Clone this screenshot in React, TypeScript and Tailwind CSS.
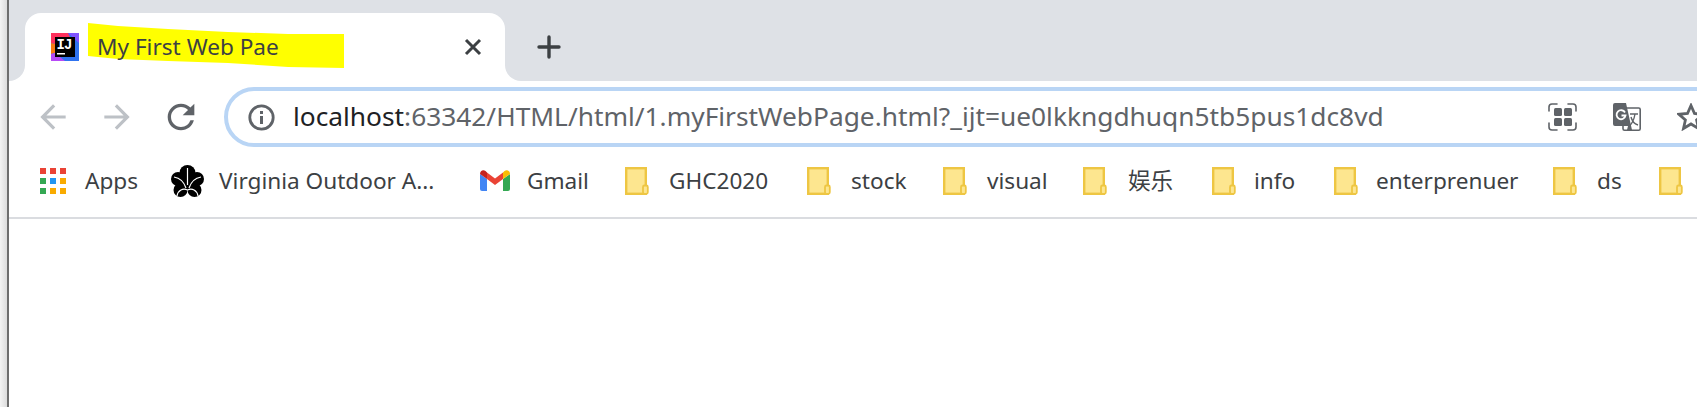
import type { ReactNode } from 'react'

// Chrome window chrome, scaled up screenshot: tab strip, omnibox and bookmarks bar

function IdeaIcon() {
  return (
    <svg width="28" height="28" viewBox="0 0 28 28" className="shrink-0">
      <rect width="28" height="28" fill="#2f73f0" />
      <polygon points="0,0 17,0 28,10 28,0" fill="#7f52ff" />
      <polygon points="0,0 17,0 20,6 8,12 0,10" fill="#fe315d" />
      <polygon points="0,10 8,12 4,20 0,21" fill="#f97a12" />
      <polygon points="0,21 4,20 14,28 0,28" fill="#b74af7" />
      <rect x="4" y="4" width="20" height="20" fill="#000000" />
      <text x="5.500" y="16" fill="#ffffff" fontSize="14" fontWeight="700" fontFamily="Liberation Mono, monospace" textLength="16">IJ</text>
      <rect x="6" y="20" width="8" height="1.5" fill="#ffffff" />
    </svg>
  )
}

function AppsIcon() {
  const colors = ['#ea4335', '#ea4335', '#ea4335', '#34a853', '#2196f3', '#f9ab00', '#34a853', '#f9ab00', '#f9ab00']
  return (
    <svg width="26" height="26" viewBox="0 0 26 26" className="shrink-0">
      {colors.map((c, i) => (
        <rect key={i} x={(i % 3) * 10} y={Math.floor(i / 3) * 10} width="6" height="6" fill={c} />
      ))}
    </svg>
  )
}

function FlowerIcon() {
  return (
    <svg width="33" height="32" viewBox="0 0 33 32" className="shrink-0">
      <circle cx="16.5" cy="8" r="8" fill="#000" />
      <circle cx="7" cy="14" r="7" fill="#000" />
      <circle cx="26" cy="14" r="7" fill="#000" />
      <circle cx="9.5" cy="25" r="7" fill="#000" />
      <circle cx="23.5" cy="25" r="7" fill="#000" />
      <rect x="8" y="10" width="17" height="15" fill="#000" />
      <g fill="none" stroke="#fff" strokeWidth="1.2">
        <path d="M16.5 3V20" />
        <path d="M3 12C9 13 13 17 15 23" />
        <path d="M30 12C24 13 20 17 18 23" />
        <path d="M6 31C7 25 12 23 16.5 25C21 23 26 25 27 31" />
      </g>
    </svg>
  )
}

function GmailIcon() {
  return (
    <svg width="30" height="21" viewBox="0 0 30 21" className="shrink-0">
      <path d="M0 4V19a2 2 0 0 0 2 2H7V9z" fill="#4285f4" />
      <path d="M30 4V19a2 2 0 0 1-2 2H23V9z" fill="#34a853" />
      <path d="M7 9V2.5L15 8.5 23 2.5V9L15 15z" fill="#ea4335" />
      <path d="M0 4C0 1 3 -1 5.5 1L7 2.5V9L0 4z" fill="#c5221f" />
      <path d="M30 4C30 1 27 -1 24.500 1L23 2.500V9L30 4z" fill="#fbbc04" />
    </svg>
  )
}

function FolderIcon() {
  return (
    <svg width="24" height="28" viewBox="0 0 24 28" className="shrink-0">
      <rect x="1.2" y="1.2" width="19.600" height="25.600" fill="#fde68f" stroke="#eec643" strokeWidth="2.400" />
      <rect x="18" y="18.500" width="4.800" height="8.300" rx="1.500" fill="#fde68f" stroke="#eec643" strokeWidth="1.800" />
    </svg>
  )
}

function ArrowIcon({ flip = false }: { flip?: boolean }) {
  return (
    <svg width="38" height="38" viewBox="0 0 24 24" fill="#bdc1c6" className={flip ? 'rotate-180' : ''}>
      <path d="M20 11H7.830l5.590-5.590L12 4l-8 8 8 8 1.410-1.410L7.830 13H20v-2z" />
    </svg>
  )
}

function ReloadIcon() {
  return (
    <svg width="40" height="40" viewBox="0 0 24 24" fill="#5f6368">
      <path d="M17.650 6.350A7.958 7.958 0 0 0 12 4c-4.420 0-7.990 3.580-7.990 8s3.570 8 7.990 8c3.730 0 6.840-2.550 7.730-6h-2.080A5.990 5.990 0 0 1 12 18c-3.310 0-6-2.690-6-6s2.690-6 6-6c1.660 0 3.140.69 4.220 1.780L13 11h7V4l-2.350 2.350z" />
    </svg>
  )
}

function InfoIcon() {
  return (
    <svg width="27" height="27" viewBox="0 0 27 27" className="shrink-0">
      <circle cx="13.500" cy="13.500" r="11.700" fill="none" stroke="#5f6368" strokeWidth="2.800" />
      <rect x="12" y="12" width="3" height="8" fill="#5f6368" />
      <rect x="12" y="7" width="3" height="3" fill="#5f6368" />
    </svg>
  )
}

function LensIcon() {
  return (
    <svg width="29" height="28" viewBox="0 0 29 28" className="shrink-0">
      <g fill="none" stroke="#5f6368" strokeWidth="1.600" strokeLinecap="round">
        <path d="M1 8V4a3 3 0 0 1 3-3H9" />
        <path d="M20 1H25a3 3 0 0 1 3 3V8" />
        <path d="M28 20V24a3 3 0 0 1-3 3H20" />
        <path d="M9 27H4a3 3 0 0 1-3-3V20" />
      </g>
      <rect x="6" y="5" width="8" height="8" rx="1.500" fill="#5f6368" />
      <rect x="16" y="5" width="8" height="8" rx="1.500" fill="#5f6368" />
      <rect x="6" y="15" width="8" height="8" rx="1.500" fill="#5f6368" />
      <rect x="16" y="15" width="8" height="8" rx="1.500" fill="#5f6368" />
    </svg>
  )
}

function TranslateIcon() {
  return (
    <svg width="28" height="28" viewBox="0 0 28 28" className="shrink-0">
      <rect x="10" y="5" width="17.200" height="22.200" rx="1.500" fill="#ffffff" stroke="#5f6368" strokeWidth="1.600" />
      <path d="M2 0H13L19 27H14L15 23H2a2 2 0 0 1-2-2V2a2 2 0 0 1 2-2z" fill="#5f6368" />
      <path d="M12 9.500A4.500 4.500 0 1 0 12.500 12.500H8.500" fill="none" stroke="#ffffff" strokeWidth="1.800" />
      <path d="M17 11H25M22 11C21 17 19 21 16 23M18 14C19 18 22 21 25 22" fill="none" stroke="#5f6368" strokeWidth="1.400" />
    </svg>
  )
}

function StarIcon() {
  return (
    <svg width="28" height="28" viewBox="0 0 28 28" className="shrink-0">
      <polygon
        points="14,2.500 17.500,10.500 26,11.300 19.600,17 21.500,25.500 14,21 6.500,25.500 8.400,17 2,11.300 10.500,10.500"
        fill="none"
        stroke="#5f6368"
        strokeWidth="2.800"
      />
    </svg>
  )
}

type Bookmark = {
  icon: ReactNode
  label: string
  width: string
  gap: string
}

const bookmarks: Bookmark[] = [
  { icon: <AppsIcon />, label: 'Apps', width: 'w-[131px]', gap: 'ml-[19px]' },
  { icon: <FlowerIcon />, label: 'Virginia Outdoor A...', width: 'w-[309px]', gap: 'ml-[15px]' },
  { icon: <GmailIcon />, label: 'Gmail', width: 'w-[145px]', gap: 'ml-[17px]' },
  { icon: <FolderIcon />, label: 'GHC2020', width: 'w-[182px]', gap: 'ml-[20px]' },
  { icon: <FolderIcon />, label: 'stock', width: 'w-[136px]', gap: 'ml-[20px]' },
  { icon: <FolderIcon />, label: 'visual', width: 'w-[140px]', gap: 'ml-[20px]' },
  { icon: <FolderIcon />, label: '娱乐', width: 'w-[129px]', gap: 'ml-[21px]' },
  { icon: <FolderIcon />, label: 'info', width: 'w-[122px]', gap: 'ml-[18px]' },
  { icon: <FolderIcon />, label: 'enterprenuer', width: 'w-[219px]', gap: 'ml-[18px]' },
  { icon: <FolderIcon />, label: 'ds', width: 'w-[106px]', gap: 'ml-[20px]' },
  { icon: <FolderIcon />, label: '', width: 'w-[60px]', gap: 'ml-0' },
]

export default function App() {
  return (
    <div className="flex h-[407px] w-[1697px] overflow-hidden bg-white font-['Noto_Sans','Noto_Sans_CJK_SC',sans-serif]">
      {/* screenshot edge */}
      <div className="w-[7px] shrink-0 bg-gradient-to-r from-[#f4f4f4] to-[#dcdcdc]" />
      <div className="w-[2px] shrink-0 bg-[#6e6e6e]" />

      <div className="flex min-w-0 flex-1 flex-col">
        {/* Tab strip */}
        <div className="flex h-[81px] items-end bg-[#dee1e6]">
          <div className="h-[16px] w-[16px] shrink-0 bg-white">
            <div className="h-full w-full rounded-br-[16px] bg-[#dee1e6]" />
          </div>
          <div className="relative flex h-[68px] w-[480px] shrink-0 items-center rounded-t-[16px] bg-white">
            <svg width="256" height="45" viewBox="0 0 256 45" className="absolute left-[63px] top-[10px]">
              <polygon
                points="0,0 30,3 80,6 140,9 200,11 256,11 256,45 200,44 140,40 80,38 30,36 0,33"
                fill="#ffff00"
              />
            </svg>
            <div className="relative ml-[26px]">
              <IdeaIcon />
            </div>
            <span className="relative ml-[18px] flex-1 whitespace-nowrap text-[22.6px] text-[#3c4043]">
              My First Web Pae
            </span>
            <svg width="18" height="18" viewBox="0 0 18 18" className="mr-[23px]">
              <path d="M2 2L16 16M16 2L2 16" stroke="#3c4043" strokeWidth="3" fill="none" />
            </svg>
          </div>
          <div className="h-[16px] w-[16px] shrink-0 bg-white">
            <div className="h-full w-full rounded-bl-[16px] bg-[#dee1e6]" />
          </div>
          <svg width="24" height="24" viewBox="0 0 24 24" className="mb-[22px] ml-[16px]">
            <path d="M12 2V22M2 12H22" stroke="#3c4043" strokeWidth="3.400" strokeLinecap="round" fill="none" />
          </svg>
        </div>

        {/* Toolbar */}
        <div className="flex h-[66px] items-start pl-[12px] pt-[6px]">
          <div className="flex h-[60px] w-[64px] shrink-0 items-center justify-center">
            <ArrowIcon />
          </div>
          <div className="flex h-[60px] w-[64px] shrink-0 items-center justify-center">
            <ArrowIcon flip />
          </div>
          <div className="flex h-[60px] w-[64px] shrink-0 items-center justify-center">
            <ReloadIcon />
          </div>
          <div className="ml-[11px] flex h-[60px] w-[1576px] shrink-0 items-center rounded-full border-4 border-[#b9d5f5] pl-[20px] pr-[91px]">
            <InfoIcon />
            <span className="ml-[18px] flex-1 whitespace-nowrap text-[26.3px] text-[#5f6368]">
              <span className="text-[#202124]">localhost</span>:63342/HTML/html/1.myFirstWebPage.html?_ijt=ue0lkkngdhuqn5tb5pus1dc8vd
            </span>
            <div className="flex items-center gap-[36px]">
              <LensIcon />
              <TranslateIcon />
              <StarIcon />
            </div>
          </div>
        </div>

        {/* Bookmarks bar */}
        <div className="flex h-[72px] items-center border-b-2 border-[#dadce0] pb-[2px] pl-[31px]">
          {bookmarks.map((b, i) => (
            <div key={i} className={`flex shrink-0 items-center ${b.width}`}>
              {b.icon}
              {b.label && (
                <span className={`whitespace-nowrap text-[22.6px] text-[#3c4043] ${b.gap}`}>{b.label}</span>
              )}
            </div>
          ))}
        </div>
      </div>
    </div>
  )
}
